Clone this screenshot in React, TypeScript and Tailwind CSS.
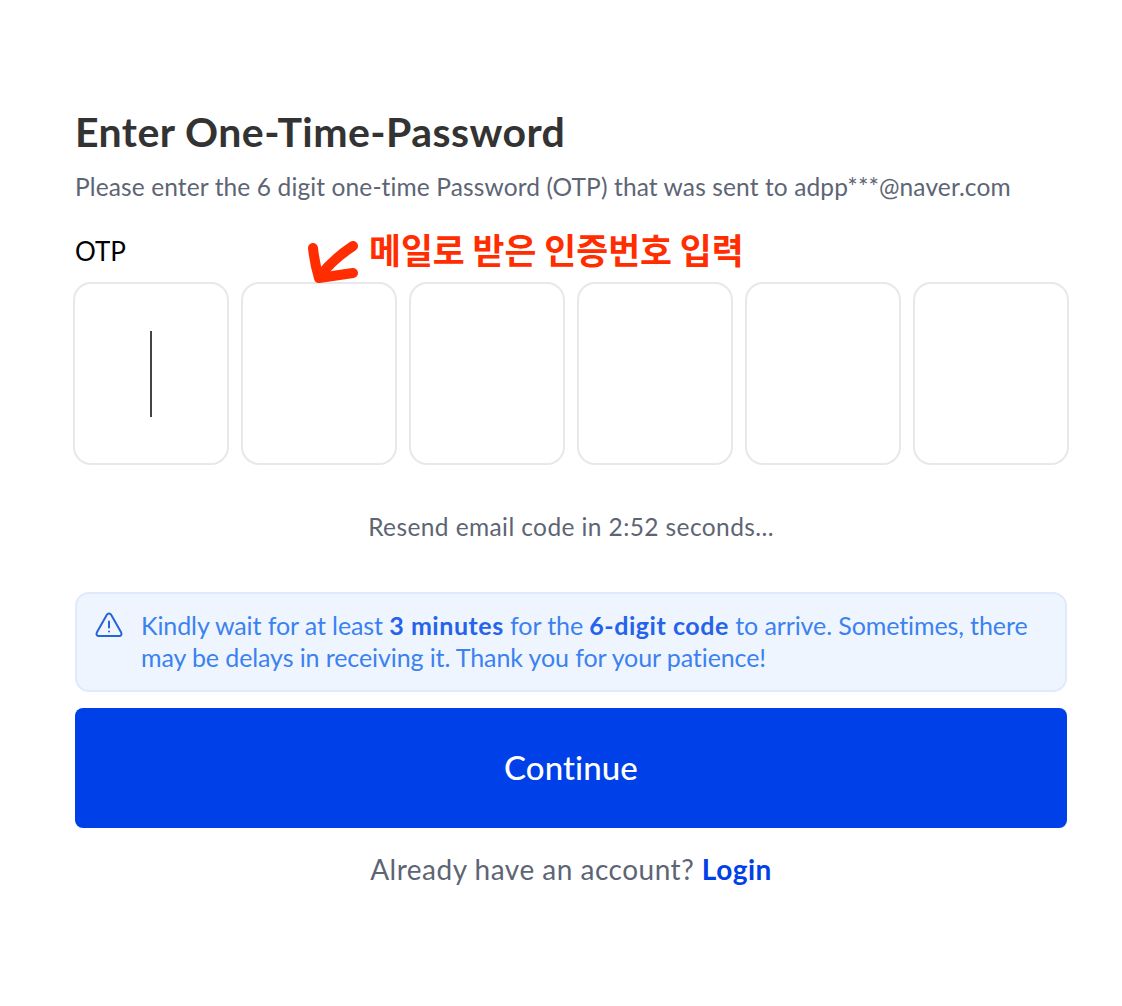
import React from 'react';

const OtpBox: React.FC<{ active?: boolean }> = ({ active }) => (
  <div className="flex h-[183px] w-[156px] shrink-0 items-center justify-center rounded-[18px] border-2 border-[#e7e8ec] bg-white">
    {active && <div className="h-[86px] w-[2px] bg-[#444]" />}
  </div>
);

export default function App() {
  return (
    <div className="relative min-h-[1006px] bg-white font-['Lato','Noto_Sans_CJK_KR',sans-serif]">
      <div className="flex flex-col pl-[75px] pr-[55px] pt-[108px]">
        <h1 className="text-[41px] font-bold leading-[47px] tracking-[0.45px] text-[#333]">Enter One-Time-Password</h1>
        <p className="mt-[16px] text-[24.5px] leading-[32px] tracking-[0.12px] text-[#5d6575]">
          Please enter the 6 digit one-time Password (OTP) that was sent to adpp***@naver.com
        </p>
        <label className="mt-[30px] text-[26px] leading-[36px] text-black">OTP</label>
        <div className="ml-[-2px] mt-[13px] flex gap-[12px]">
          <OtpBox active />
          <OtpBox />
          <OtpBox />
          <OtpBox />
          <OtpBox />
          <OtpBox />
        </div>
        <p className="mt-[46px] text-center text-[24.5px] leading-[32px] tracking-[0.4px] text-[#5d6575]">
          Resend email code in 2:52 seconds...
        </p>
        <div className="mt-[49px] flex h-[100px] items-start gap-[17px] rounded-[14px] border-2 border-[#dfeafc] bg-[#eff5fe] pl-[17px] pr-[20px] pt-[15px]">
          <svg className="mt-[1px] h-[30px] w-[30px] shrink-0" viewBox="0 0 30 30" fill="none" stroke="#2563d8" strokeWidth="2" strokeLinejoin="round" strokeLinecap="round">
            <path d="M13 4.6 L2.8 22.6 C1.9 24.3 3 26 4.8 26 H25.2 C27 26 28.1 24.3 27.2 22.6 L17 4.6 C16.1 3 13.9 3 13 4.6 Z" />
            <path d="M15 11.5 V17.5" />
            <path d="M15 21.5 V21.6" />
          </svg>
          <p className="text-[25px] leading-[32px] tracking-[-0.1px] text-[#3b82f0]">
            Kindly wait for at least <b className="tracking-[0.55px] text-[#2563eb]">3 minutes</b> for the <b className="tracking-[0.55px] text-[#2563eb]">6-digit code</b> to arrive. Sometimes, there
            <br />
            may be delays in receiving it. Thank you for your patience!
          </p>
        </div>
        <button className="mt-[16px] h-[120px] rounded-[8px] bg-[#0040e8] text-[33px] font-medium tracking-[0.1px] text-white">Continue</button>
        <p className="mt-[23px] text-center text-[28px] leading-[36px] tracking-[0.5px] text-[#5d6575]">
          Already have an account? <a className="font-bold text-[#0040e8]">Login</a>
        </p>
      </div>

      {/* hand-drawn annotation on top of the screenshot */}
      <svg className="absolute left-[304px] top-[238px] h-[50px] w-[60px]" viewBox="0 0 60 50" fill="none" stroke="#ff2d00" strokeWidth="10" strokeLinecap="round" strokeLinejoin="round">
        <path d="M9 10 C10 20 12 30 15 40 L49 35" />
        <path d="M16 38 C25 26 37 16 49 8" />
      </svg>
      <div className="absolute left-[369px] top-[226px] font-['Noto_Sans_CJK_KR',sans-serif] text-[34.7px] font-bold leading-[46px] text-[#ff2d00]">
        메일로 받은 인증번호 입력
      </div>
    </div>
  );
}
